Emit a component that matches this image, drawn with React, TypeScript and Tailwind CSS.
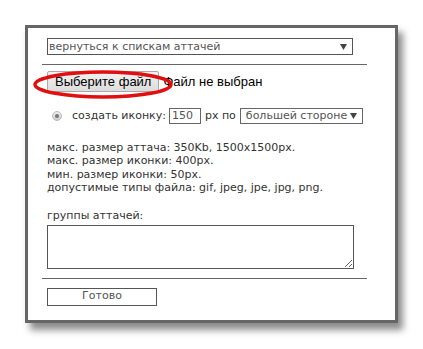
import React from "react";

const verdana = "font-['DejaVu_Sans',Verdana,sans-serif]";
const arial = "font-['Liberation_Sans',Arial,sans-serif]";

function Arrow() {
  return (
    <svg width="7" height="6" viewBox="0 0 7 6" className="shrink-0">
      <path d="M0 0 L7 0 L3.5 6 Z" fill="#444" />
    </svg>
  );
}

export default function App() {
  return (
    <div className="h-[349px] w-[423px] bg-white pl-[25px] pt-[25px]">
      <div
        className={`relative h-[298px] w-[373px] border-[3px] border-[#666] bg-white shadow-[5px_7px_7px_rgba(0,0,0,0.45)] ${verdana}`}
      >
        <div className="pl-[14px] pr-[28px] pt-[10px]">
          <div className="ml-[5px] mr-[14px] flex h-[17px] items-center justify-between border border-[#555] pl-[1px] pr-[5px] text-[11px] leading-none text-[#555]">
            <span>вернуться к спискам аттачей</span>
            <Arrow />
          </div>

          <div className="mt-[9px] h-px bg-[#666]" />

          <div className={`ml-[5px] mt-[6px] flex items-center ${arial} text-[13px] text-black`}>
            <div className="flex h-[21px] items-center rounded-[2px] border border-[#a9a9a9] bg-gradient-to-b from-[#f3f3f3] to-[#dcdcdc] px-[7px]">
              Выберите файл
            </div>
            <span className="ml-[4px]">Файл не выбран</span>
          </div>

          <div className="ml-[10px] mt-[16px] flex h-[16px] items-center whitespace-nowrap text-[11px] text-[#333]">
            <div className="flex h-[10px] w-[10px] items-center justify-center rounded-full border border-[#bbb] bg-gradient-to-b from-[#eee] to-[#ccc]">
              <div className="h-[4px] w-[4px] rounded-full bg-[#777]" />
            </div>
            <span className="ml-[10px]">создать иконку:</span>
            <div className="ml-[3px] flex h-[16px] w-[32px] items-center border border-[#666] pl-[2px] text-[11px] text-[#555]">
              150
            </div>
            <span className="ml-[4px]">px по</span>
            <div className="ml-[4px] flex h-[16px] w-[123px] items-center justify-between border border-[#666] pl-[5px] pr-[5px] text-[11px] text-[#555]">
              <span>большей стороне</span>
              <Arrow />
            </div>
          </div>

          <div className="ml-[5px] mt-[17px] text-[11px] leading-[13.4px] text-[#333]">
            <div>макс. размер аттача: 350Kb, 1500x1500px.</div>
            <div>макс. размер иконки: 400px.</div>
            <div>мин. размер иконки: 50px.</div>
            <div>допустимые типы файла: gif, jpeg, jpe, jpg, png.</div>
          </div>

          <div className="ml-[5px] mt-[14px] text-[11px] leading-[13px] text-[#333]">
            группы аттачей:
          </div>

          <textarea
            className="mb-0 ml-[5px] mt-[3px] block h-[44px] w-[307px] border border-[#555] bg-white outline-none"
            defaultValue=""
          />

          <div className="mt-[9px] h-px bg-[#666]" />

          <div className="ml-[5px] mt-[9px] flex h-[18px] w-[110px] items-center justify-center border border-[#555] text-[11px] text-[#555]">
            Готово
          </div>
        </div>

        <svg
          className="pointer-events-none absolute left-[4px] top-[41px]"
          width="143"
          height="32"
          viewBox="0 0 143 32"
        >
          <ellipse
            cx="71"
            cy="15.5"
            rx="68"
            ry="12.5"
            fill="none"
            stroke="#e01010"
            strokeWidth="3.5"
          />
        </svg>
      </div>
    </div>
  );
}
